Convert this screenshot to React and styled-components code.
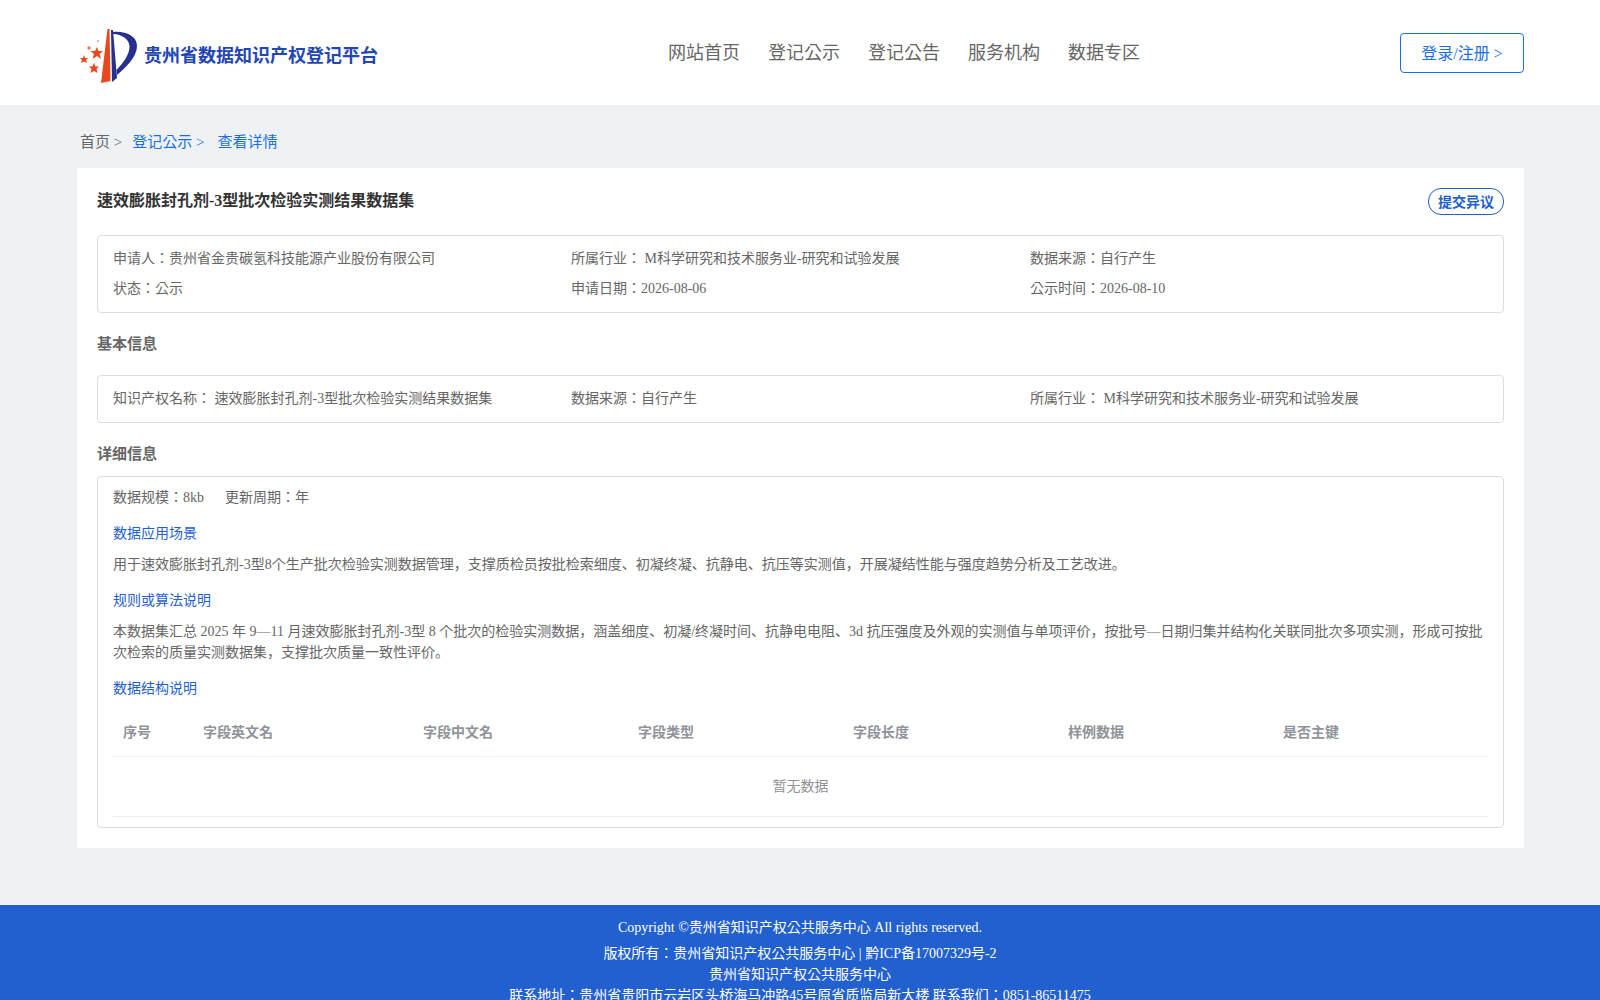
import React from "react";
import styled, { createGlobalStyle } from "styled-components";

const GlobalStyle = createGlobalStyle`
  html, body {
    margin: 0;
    padding: 0;
    background: #eff2f5;
    font-family: "Liberation Serif", "Noto Sans CJK KR", serif;
    color: #666;
  }
  * {
    box-sizing: border-box;
  }
`;

const NAV_ITEMS = ["网站首页", "登记公示", "登记公告", "服务机构", "数据专区"];
const COLUMNS = [
  { label: "序号", width: 80 },
  { label: "字段英文名", width: 220 },
  { label: "字段中文名", width: 215 },
  { label: "字段类型", width: 215 },
  { label: "字段长度", width: 215 },
  { label: "样例数据", width: 215 },
  { label: "是否主键", width: 215 },
];

function Logo() {
  return (
    <svg width="58" height="56" viewBox="80 28 58 56">
      <path d="M101 83 L107.5 29 L109.5 29 L110.5 81 Z" fill="#e8481c" />
      <path d="M111 30 L113 30 L117 78 L112 82 Z" fill="#27308f" />
      <path
        d="M113 32 C126 31 137 36 137 46 C137 57 126 67 117 75 L116.5 70 C123 63 130 54 129.5 46 C129 39 122 34.5 113 34 Z"
        fill="#27308f"
      />
      <polygon points="97,47 98.5,51 103,51 99.5,54 101,59 97,56 92.5,59 94,54 90.5,51 95,51" fill="#e8481c" />
      <polygon points="84,55 85,58 88,58 86,60 87,63 84,61.5 81,63 82,60 80,58 83,58" fill="#e8481c" />
      <polygon points="94,63 95.5,66.5 99,66.5 96.5,69 97.5,73 94,71 90.5,73 91.5,69 89,66.5 92.5,66.5" fill="#e8481c" />
      <circle cx="89" cy="48" r="1.7" fill="#ef7a4e" />
      <circle cx="98" cy="41" r="1" fill="#ef9a78" />
    </svg>
  );
}

function App() {
  return (
    <Page>
      <GlobalStyle />
      <Header>
        <Brand>
          <Logo />
          <BrandName>贵州省数据知识产权登记平台</BrandName>
        </Brand>
        <Nav>
          {NAV_ITEMS.map((item) => (
            <NavItem key={item}>{item}</NavItem>
          ))}
        </Nav>
        <LoginBtn>登录/注册 &gt;</LoginBtn>
      </Header>
      <Crumbs>
        <span>首页 &gt;</span>
        <CrumbLink>登记公示 &gt;</CrumbLink>
        <CrumbLink $gap>查看详情</CrumbLink>
      </Crumbs>
      <Card>
        <TitleRow>
          <Title>速效膨胀封孔剂-3型批次检验实测结果数据集</Title>
          <ObjectBtn>提交异议</ObjectBtn>
        </TitleRow>
        <InfoBox>
          <InfoGrid>
            <span>申请人：贵州省金贵碳氢科技能源产业股份有限公司</span>
            <span>所属行业： M科学研究和技术服务业-研究和试验发展</span>
            <span>数据来源：自行产生</span>
            <span>状态：公示</span>
            <span>申请日期：2026-08-06</span>
            <span>公示时间：2026-08-10</span>
          </InfoGrid>
        </InfoBox>
        <SectionTitle>基本信息</SectionTitle>
        <BasicBox>
          <InfoGrid>
            <span>知识产权名称： 速效膨胀封孔剂-3型批次检验实测结果数据集</span>
            <span>数据来源：自行产生</span>
            <span>所属行业： M科学研究和技术服务业-研究和试验发展</span>
          </InfoGrid>
        </BasicBox>
        <DetailTitle>详细信息</DetailTitle>
        <DetailBox>
          <MetaRow>
            <span>数据规模：8kb</span>
            <span>更新周期：年</span>
          </MetaRow>
          <SubTitle>数据应用场景</SubTitle>
          <Para>
            用于速效膨胀封孔剂-3型8个生产批次检验实测数据管理，支撑质检员按批检索细度、初凝终凝、抗静电、抗压等实测值，开展凝结性能与强度趋势分析及工艺改进。
          </Para>
          <SubTitle>规则或算法说明</SubTitle>
          <Para>
            本数据集汇总 2025 年 9—11 月速效膨胀封孔剂-3型 8 个批次的检验实测数据，涵盖细度、初凝/终凝时间、抗静电电阻、3d 抗压强度及外观的实测值与单项评价，按批号—日期归集并结构化关联同批次多项实测，形成可按批次检索的质量实测数据集，支撑批次质量一致性评价。
          </Para>
          <SubTitle>数据结构说明</SubTitle>
          <TableHead>
            {COLUMNS.map((col) => (
              <HeadCell key={col.label} $width={col.width}>
                {col.label}
              </HeadCell>
            ))}
          </TableHead>
          <EmptyRow>暂无数据</EmptyRow>
        </DetailBox>
      </Card>
      <Footer>
        <CopyLine>Copyright ©贵州省知识产权公共服务中心 All rights reserved.</CopyLine>
        <FootLine>版权所有：贵州省知识产权公共服务中心 | 黔ICP备17007329号-2</FootLine>
        <FootLine>贵州省知识产权公共服务中心</FootLine>
        <FootLine>联系地址：贵州省贵阳市云岩区头桥海马冲路45号原省质监局新大楼 联系我们：0851-86511475</FootLine>
      </Footer>
    </Page>
  );
}
export default App;

const Page = styled.div`
  height: 1000px;
  overflow: hidden;
`;

const Header = styled.header`
  height: 105px;
  background: #fff;
  padding: 0 76px 0 80px;
  display: flex;
  align-items: flex-start;
`;

const Brand = styled.div`
  width: 588px;
  padding-top: 28px;
  display: flex;
  align-items: center;
  gap: 6px;
`;

const BrandName = styled.div`
  font-size: 18px;
  font-weight: bold;
  color: #2446b4;
  margin-bottom: 4px;
`;

const Nav = styled.nav`
  display: flex;
  gap: 28px;
  padding-top: 41px;
`;

const NavItem = styled.a`
  font-size: 18px;
  line-height: 24px;
  color: #666;
`;

const LoginBtn = styled.button`
  margin: 33px 0 0 auto;
  width: 124px;
  height: 40px;
  padding: 0 0 2px;
  background: #fff;
  border: 1px solid #1a6fe8;
  border-radius: 4px;
  color: #1a6fe8;
  font-family: inherit;
  font-size: 16px;
`;

const Crumbs = styled.div`
  height: 63px;
  padding: 27px 0 0 80px;
  font-size: 15px;
  line-height: 20px;
  display: flex;
`;

const CrumbLink = styled.span`
  color: #1a6fe8;
  margin-left: ${(p) => (p.$gap ? 13 : 10)}px;
`;

const Card = styled.main`
  width: 1447px;
  height: 680px;
  margin-left: 77px;
  background: #fff;
  padding: 20px 20px 0;
`;

const TitleRow = styled.div`
  height: 47px;
  display: flex;
  justify-content: space-between;
  align-items: flex-start;
`;

const Title = styled.h1`
  margin: 1px 0 0;
  font-size: 16px;
  line-height: 24px;
  font-weight: bold;
  color: #333;
`;

const ObjectBtn = styled.button`
  width: 76px;
  height: 27px;
  padding: 0 0 2px;
  background: #fff;
  border: 1px solid #1f5fcf;
  border-radius: 13px;
  color: #1f5fcf;
  font-family: inherit;
  font-size: 14px;
  font-weight: bold;
`;

const Box = styled.section`
  border: 1px solid #ddd;
  border-radius: 4px;
  padding: 0 15px;
  font-size: 14px;
  color: #666;
`;

const InfoBox = styled(Box)`
  height: 78px;
  padding-top: 8px;
`;

const BasicBox = styled(Box)`
  height: 48px;
  padding-top: 8px;
`;

const InfoGrid = styled.div`
  display: grid;
  grid-template-columns: 458px 459px 1fr;
  grid-auto-rows: 30px;
  line-height: 30px;
`;

const SectionTitle = styled.h2`
  margin: 0;
  height: 62px;
  padding-top: 20px;
  font-size: 15px;
  line-height: 22px;
  font-weight: bold;
  color: #666;
`;

const DetailTitle = styled(SectionTitle)`
  height: 53px;
`;

const DetailBox = styled(Box)`
  height: 352px;
`;

const MetaRow = styled.div`
  display: flex;
  gap: 21px;
  height: 41px;
  line-height: 41px;
`;

const SubTitle = styled.div`
  color: #1f5fcf;
  line-height: 21px;
  height: 21px;
  margin-top: 5px;
`;

const Para = styled.p`
  margin: 10px 0 15px;
  line-height: 21px;
`;

const TableHead = styled.div`
  display: flex;
  height: 57px;
  margin-top: 1px;
  padding-top: 6px;
  align-items: center;
  border-bottom: 1px solid #ebeef5;
  color: #909399;
  font-weight: bold;
`;

const HeadCell = styled.div`
  width: ${(p) => p.$width}px;
  padding-left: 10px;
`;

const EmptyRow = styled.div`
  height: 60px;
  line-height: 60px;
  text-align: center;
  color: #909399;
  border-bottom: 1px solid #ebeef5;
`;

const Footer = styled.footer`
  margin-top: 57px;
  height: 95px;
  background: #2260d0;
  color: #fff;
  font-size: 14px;
  text-align: center;
  padding-top: 12px;
`;

const CopyLine = styled.div`
  line-height: 21px;
  margin-bottom: 5px;
`;

const FootLine = styled.div`
  line-height: 21px;
`;
